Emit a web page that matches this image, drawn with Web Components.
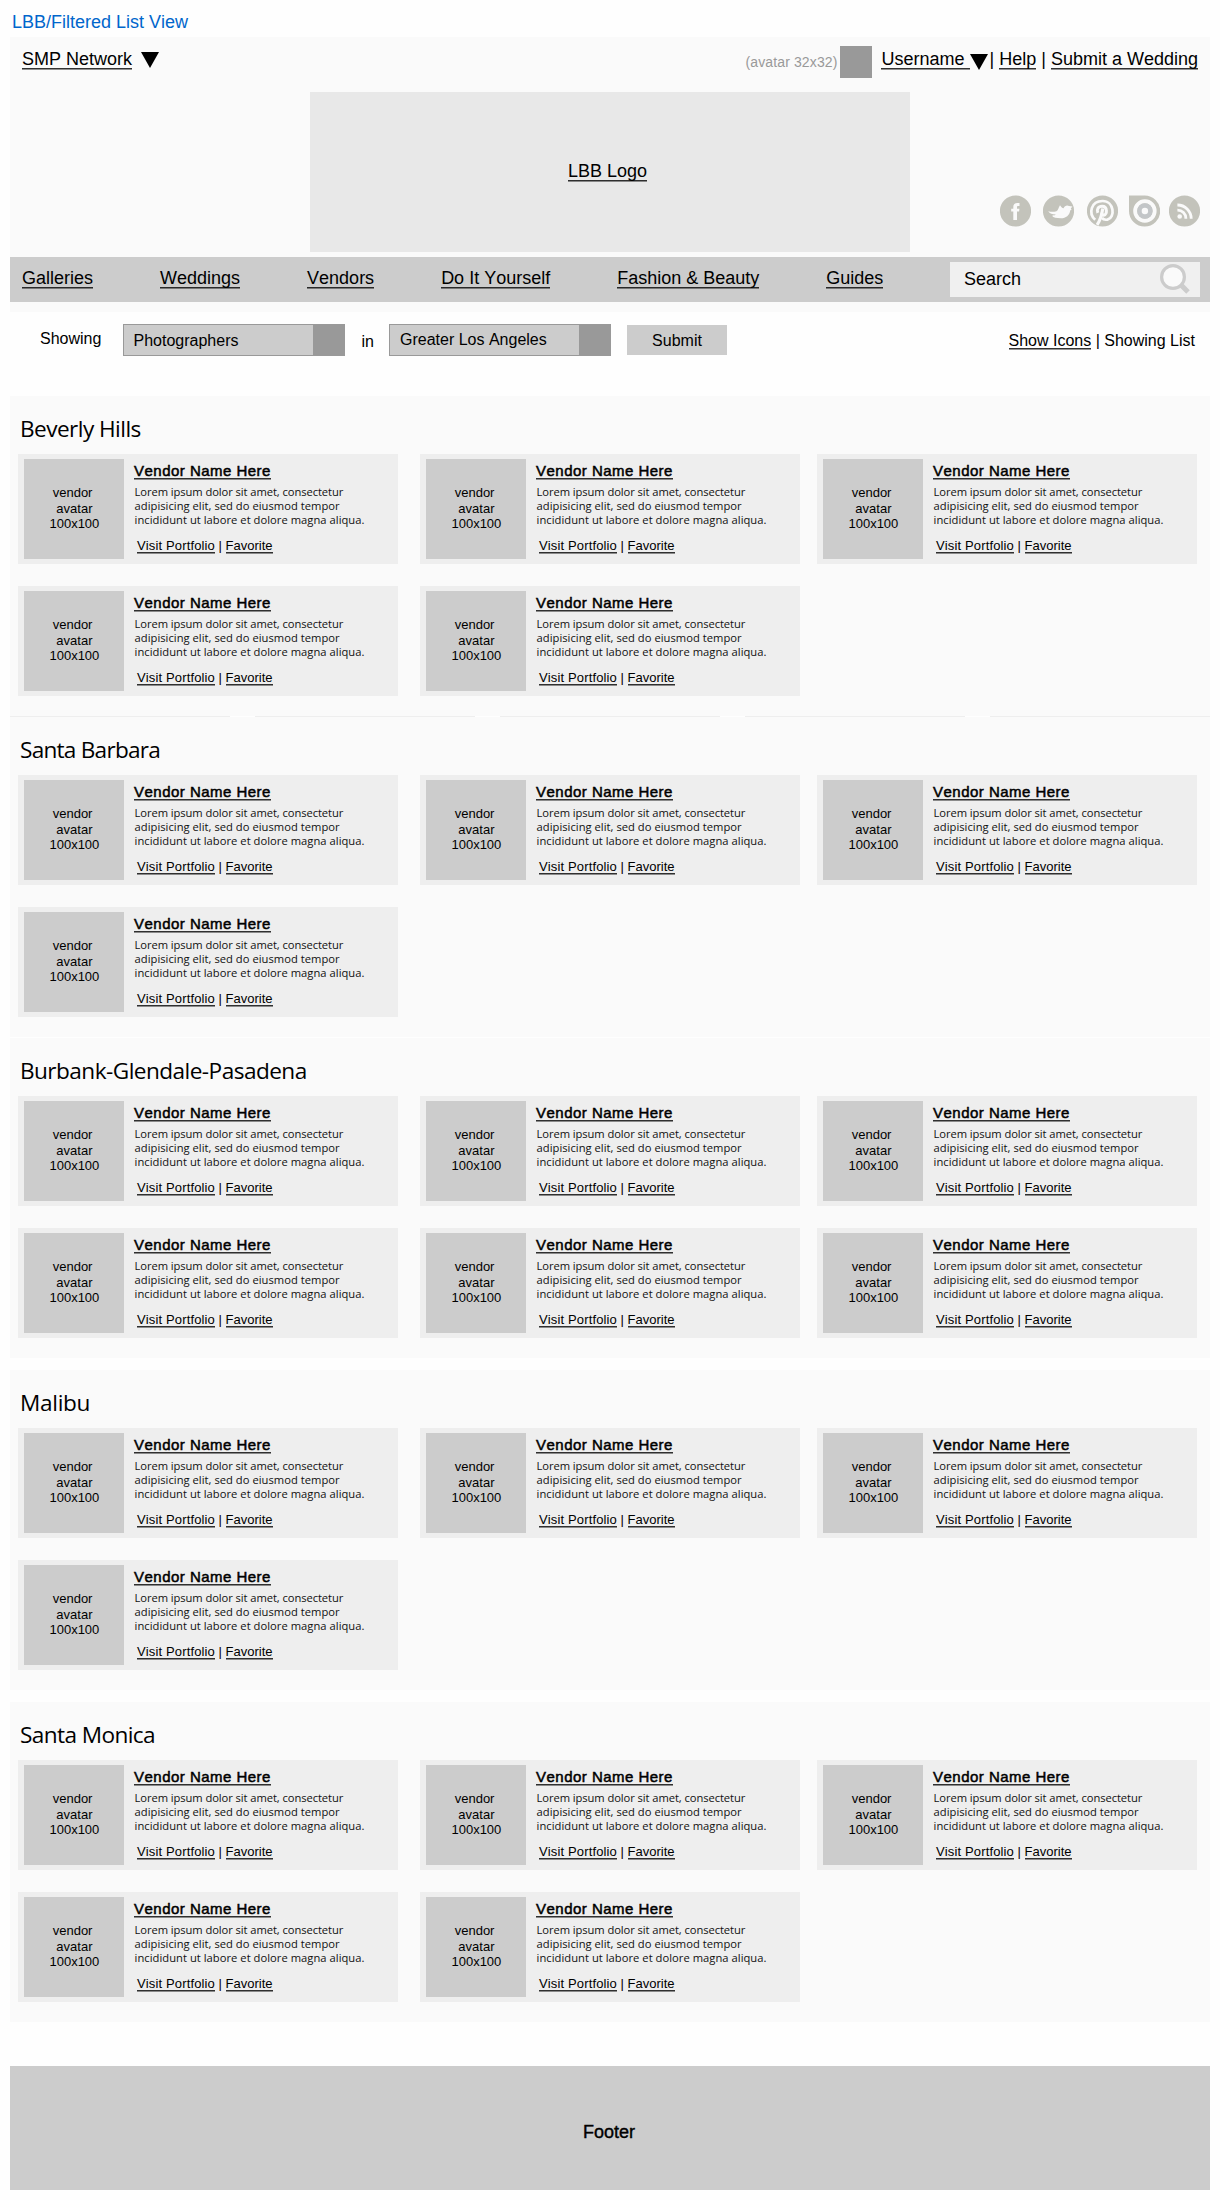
<!DOCTYPE html>
<html lang="en">
<head>
<meta charset="utf-8">
<title>LBB/Filtered List View</title>
<style>
body{margin:0;background:#fefefe;color:#000;font:18px/20px "Liberation Sans",Arial,sans-serif;font-kerning:none}
</style>
</head>
<body>
<lbb-page></lbb-page>
<script>
const define=(name,html,setup)=>customElements.define(name,class extends HTMLElement{
  constructor(){
    super();
    const t=document.createElement('template');
    t.innerHTML=html;
    this.attachShadow({mode:'open'}).append(t.content.cloneNode(true));
  }
  connectedCallback(){ if(setup) setup(this,this.shadowRoot); }
});

define('ui-link',`<style>
:host{display:inline}
a{color:inherit;text-decoration:none;white-space:pre;padding-bottom:1px;
background:linear-gradient(rgba(0,0,0,.8) 50%,rgba(0,0,0,.42) 50%) 0 100%/100% 2px no-repeat}
</style><a><slot></slot></a>`);

define('caret-down',`<style>
:host{display:block;width:18px;height:16px}
svg{display:block}
</style><svg width="18" height="16"><path d="M0 0H18L9 16Z"/></svg>`);

define('social-icons',`<style>
:host{display:flex;align-items:flex-start}
svg{display:block;width:31px;height:32px;flex:none;fill:#c3c3bb}
.w{fill:#fafafa}.s{fill:none;stroke:#fafafa}
</style>
<svg viewBox="0 0 31 32"><circle cx="15.5" cy="16" r="15.6"/><path class="w" d="M13.3 25V16.6H11.2V13.7H13.3V12C13.3 9.2 14.8 8 17.4 8H19.5V10.9H18.2C17.3 10.9 17 11.3 17 12.2V13.7H19.4L19.1 16.6H17V25Z"/></svg>
<svg viewBox="0 0 31 32" style="margin-left:12px"><circle cx="15.5" cy="16" r="15.6"/><path class="w" d="M5.2 16.2C8 17 11 17 13.4 16.2C15.4 15.4 15.4 12.6 17 10.2C18 11.8 19 13 20.6 13.2C21.6 10.8 24 9.8 26 11L29.4 11.4L27.8 13.4L28.6 14.4L27.2 15.4C26.6 20 23 23.2 18 23.2C13.4 23.2 10.4 22.6 9 20.8C10.6 20.8 11.8 20.4 12.8 19.6C9.4 19.4 6.6 18.4 5.2 16.2Z"/></svg>
<svg viewBox="0 0 31 32" style="margin-left:13px"><circle cx="15.5" cy="16" r="15.6"/><path class="s" stroke-width="2.7" d="M8.2 24.8C1.2 18.5 3.8 6 15.6 6C27.2 6 28.6 22.6 20.4 24.6C17.8 25.1 16 24.3 15 22.9"/><path class="s" stroke-width="3" d="M10.8 17.8C9.4 14.6 11.2 11.2 15.2 11.2C20.8 11.2 20.2 19.9 16.9 20.2C15.4 20.2 14.6 19.2 14.9 17.8"/><path class="s" stroke-width="3.1" d="M15.8 13.4C15 18.8 13.8 24.3 10.1 29.8"/></svg>
<svg viewBox="0 0 31 32" style="margin-left:11px"><path d="M0 .4H15.5A15.6 15.6 0 1 1 0 16Z"/><circle class="s" cx="15.9" cy="16" r="9.7" stroke-width="4"/><circle cx="15.9" cy="16" r="7.7" style="fill:#c3c6c8"/><circle class="w" cx="15.9" cy="16" r="3.2"/></svg>
<svg viewBox="0 0 31 32" style="margin-left:9px"><circle cx="15.5" cy="16" r="15.6"/><circle class="w" cx="10.7" cy="21.5" r="2.3"/><path class="s" stroke-width="2.8" d="M8.4 15.1A8.4 8.4 0 0 1 16.9 23.7M8.4 10A13.7 13.7 0 0 1 22.2 23.7"/></svg>`);

define('search-box',`<style>
:host{display:flex;justify-content:space-between;box-sizing:border-box;width:250px;height:35px;padding:7px 0 0 14px;background:#f0f0f0}
svg{display:block;margin-top:-5px;margin-right:10px}
</style><span><slot></slot></span>
<svg width="30" height="30"><circle cx="13" cy="13" r="11.4" fill="#fafafa" stroke="#ccc" stroke-width="3.2"/><path d="M20.8 20.8L28 28" stroke="#ccc" stroke-width="5"/></svg>`);

define('site-header',`<style>
:host{display:block;background:#fafafa;padding-bottom:10px}
.top{display:flex;justify-content:space-between;align-items:flex-start;height:55px;padding:0 12px}
.side{display:flex;align-items:flex-start}
.side>span{margin-top:12px;white-space:pre}
.side>.hint{font-size:14px;line-height:16px;color:#999;margin:17px 3px 0 0;letter-spacing:.12px}
.pic{width:32px;height:32px;background:#999;margin:9px 9px 0 0}
.mid{display:grid;grid-template-columns:300px 600px 1fr;height:165px}
.logo{grid-column:2;height:160px;box-sizing:border-box;background:#e8e8e8;padding:69px 0 0 258px}
social-icons{margin:103px 10px 0 0;justify-content:flex-end}
nav{display:flex;align-items:flex-start;height:45px;background:#ccc;padding:0 10px 0 12px}
.links{display:flex;gap:67px;margin-top:11px}
search-box{margin:5px 0 0 auto}
</style>
<div class="top">
<div class="side"><span><ui-link>SMP Network</ui-link></span><caret-down style="margin:15px 0 0 8.5px"></caret-down></div>
<div class="side"><span class="hint">(avatar 32x32)</span><div class="pic"></div><span><ui-link>Username </ui-link></span><caret-down style="margin:17px 2px 0 0"></caret-down><span>| <ui-link>Help</ui-link> | <ui-link>Submit a Wedding</ui-link></span></div>
</div>
<div class="mid"><div class="logo"><ui-link>LBB Logo</ui-link></div><social-icons></social-icons></div>
<nav><div class="links"><span><ui-link>Galleries</ui-link></span><span><ui-link>Weddings</ui-link></span><span><ui-link>Vendors</ui-link></span><span><ui-link>Do It Yourself</ui-link></span><span><ui-link>Fashion &amp; Beauty</ui-link></span><span><ui-link>Guides</ui-link></span></div><search-box>Search</search-box></nav>`);

define('select-box',`<style>
:host{display:flex;justify-content:space-between;box-sizing:border-box;width:222px;height:32px;background:#ccc;border:1px solid #999;margin-top:12px}
span{padding:var(--top,7px) 0 0 var(--left,9.5px)}
i{width:31px;background:#999}
</style><span><slot></slot></span><i></i>`);

define('filter-bar',`<style>
:host{display:flex;align-items:flex-start;height:84px;font-size:16px;line-height:17px;white-space:pre}
.show{box-sizing:border-box;padding:18px 0 0 30px;width:113px}
.in{width:44px;box-sizing:border-box;padding:21px 0 0 16.5px}
.go{width:100px;height:30px;box-sizing:border-box;margin:13px 0 0 16px;padding-top:7px;background:#ccc;text-align:center}
.view{margin:20px 15px 0 auto}
</style><span class="show">Showing</span><select-box>Photographers</select-box><span class="in">in</span><select-box style="--top:6px;--left:10px">Greater Los Angeles</select-box><div class="go">Submit</div><span class="view"><ui-link>Show Icons</ui-link> | Showing List</span>`);

define('vendor-card',`<style>
:host{display:flex;width:380px;height:110px;background:#eee}
.pic{box-sizing:border-box;width:100px;height:100px;margin:5px 10px 0 6px;background:#ccc;padding:26px 0 0 .8px;font-size:13px;line-height:15.5px;text-align:center;white-space:pre}
.pic div{height:15.5px}
.name{font-size:15px;line-height:17px;margin-top:8px;letter-spacing:.48px;-webkit-text-stroke:.5px #000}
.text{margin:6px 0 0 .6px;font:11.2px/14px "Open Sans","Noto Sans",sans-serif;white-space:pre;color:#111}
.text div{height:14px}
.act{font-size:13px;line-height:15px;margin-top:11px;padding-left:3px;white-space:pre}
.v{letter-spacing:.14px}
</style>
<div class="pic"><div>vendor&nbsp;</div><div>avatar</div><div>100x100</div></div>
<div><div class="name"><ui-link>Vendor Name Here</ui-link></div>
<div class="text"><div style="letter-spacing:-.08px">Lorem ipsum dolor sit amet, consectetur</div><div style="letter-spacing:.02px">adipisicing elit, sed do eiusmod tempor</div><div style="letter-spacing:.03px">incididunt ut labore et dolore magna aliqua.</div></div>
<div class="act"><ui-link class="v">Visit Portfolio</ui-link> | <ui-link>Favorite</ui-link></div></div>`);

define('area-section',`<style>
:host{display:block;background:#fafafa;padding:0 0 20px 8px}
h2{margin:0;height:58px;box-sizing:border-box;padding:19px 0 0 2px;font:22.6px/28px "Open Sans","Noto Sans",sans-serif;letter-spacing:var(--track,-.6px);white-space:nowrap}
.grid{display:grid;grid-template-columns:402px 397px 380px;row-gap:22px}
</style><h2><slot></slot></h2><div class="grid"></div>`,(el,root)=>{
  const grid=root.querySelector('.grid');
  if(!grid.children.length) for(let i=0;i<+el.getAttribute('vendors');i++) grid.append(document.createElement('vendor-card'));
});

define('dash-rule',`<style>
:host{display:block;height:1px;background:repeating-linear-gradient(90deg,#eee 0 220px,#fefefe 220px 245px)}
</style>`);

define('site-footer',`<style>
:host{display:block;box-sizing:border-box;height:124px;margin-top:44px;padding:56px 0 0 573px;background:#ccc;-webkit-text-stroke:.4px #000}
</style><slot></slot>`);

define('lbb-page',`<style>
:host{display:block;width:1200px;padding:0 10px 10px}
.title{padding:12px 0 5px 2px;color:#06c}
</style>
<div class="title">LBB/Filtered List View</div>
<site-header></site-header>
<filter-bar></filter-bar>
<area-section vendors="5" style="--track:-.55px">Beverly Hills</area-section>
<dash-rule></dash-rule>
<area-section vendors="4" style="--track:-.75px">Santa Barbara</area-section>
<area-section vendors="6" style="--track:-.54px;margin-top:1px">Burbank-Glendale-Pasadena</area-section>
<area-section vendors="4" style="--track:-.3px;margin-top:12px">Malibu</area-section>
<area-section vendors="5" style="margin-top:12px">Santa Monica</area-section>
<site-footer>Footer</site-footer>`);
</script>
</body>
</html>
